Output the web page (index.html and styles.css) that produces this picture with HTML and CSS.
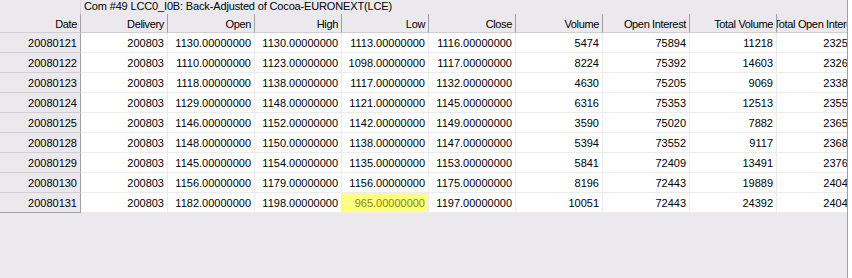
FILE: index.html
```html
<!DOCTYPE html>
<html>
<head>
<meta charset="utf-8">
<link rel="stylesheet" href="styles.css">
</head>
<body>
<div class="frame">
  <div class="view">
    <div class="titlebar">
      <div class="corner"></div>
      <div class="title">Com #49 LCC0_I0B: Back-Adjusted of Cocoa-EURONEXT(LCE)</div>
    </div>
    <div class="grid">
      <div class="hd fixed">Date</div>
      <div class="hd">Delivery</div>
      <div class="hd">Open</div>
      <div class="hd">High</div>
      <div class="hd">Low</div>
      <div class="hd">Close</div>
      <div class="hd">Volume</div>
      <div class="hd">Open Interest</div>
      <div class="hd">Total Volume</div>
      <div class="hd">Total Open Interest</div>

      <div class="fx">20080121</div><div class="c">200803</div><div class="c">1130.00000000</div><div class="c">1130.00000000</div><div class="c">1113.00000000</div><div class="c">1116.00000000</div><div class="c">5474</div><div class="c">75894</div><div class="c">11218</div><div class="c">232541</div>
      <div class="fx">20080122</div><div class="c">200803</div><div class="c">1110.00000000</div><div class="c">1123.00000000</div><div class="c">1098.00000000</div><div class="c">1117.00000000</div><div class="c">8224</div><div class="c">75392</div><div class="c">14603</div><div class="c">232673</div>
      <div class="fx">20080123</div><div class="c">200803</div><div class="c">1118.00000000</div><div class="c">1138.00000000</div><div class="c">1117.00000000</div><div class="c">1132.00000000</div><div class="c">4630</div><div class="c">75205</div><div class="c">9069</div><div class="c">233812</div>
      <div class="fx">20080124</div><div class="c">200803</div><div class="c">1129.00000000</div><div class="c">1148.00000000</div><div class="c">1121.00000000</div><div class="c">1145.00000000</div><div class="c">6316</div><div class="c">75353</div><div class="c">12513</div><div class="c">235520</div>
      <div class="fx">20080125</div><div class="c">200803</div><div class="c">1146.00000000</div><div class="c">1152.00000000</div><div class="c">1142.00000000</div><div class="c">1149.00000000</div><div class="c">3590</div><div class="c">75020</div><div class="c">7882</div><div class="c">236534</div>
      <div class="fx">20080128</div><div class="c">200803</div><div class="c">1148.00000000</div><div class="c">1150.00000000</div><div class="c">1138.00000000</div><div class="c">1147.00000000</div><div class="c">5394</div><div class="c">73552</div><div class="c">9117</div><div class="c">236812</div>
      <div class="fx">20080129</div><div class="c">200803</div><div class="c">1145.00000000</div><div class="c">1154.00000000</div><div class="c">1135.00000000</div><div class="c">1153.00000000</div><div class="c">5841</div><div class="c">72409</div><div class="c">13491</div><div class="c">237690</div>
      <div class="fx">20080130</div><div class="c">200803</div><div class="c">1156.00000000</div><div class="c">1179.00000000</div><div class="c">1156.00000000</div><div class="c">1175.00000000</div><div class="c">8196</div><div class="c">72443</div><div class="c">19889</div><div class="c">240461</div>
      <div class="fx last">20080131</div><div class="c">200803</div><div class="c">1182.00000000</div><div class="c">1198.00000000</div><div class="c hl">965.00000000</div><div class="c">1197.00000000</div><div class="c">10051</div><div class="c">72443</div><div class="c">24392</div><div class="c">240461</div>
    </div>
  </div>
  <div class="edge"></div>
</div>
</body>
</html>
```

FILE: styles.css
```css
html, body {
  margin: 0;
  padding: 0;
}
body {
  background: #ebe9ed;
  font-family: "Liberation Sans", Arial, sans-serif;
  font-size: 11px;
  color: #000;
  width: 852px;
  height: 278px;
  overflow: hidden;
}
.frame {
  display: flex;
  height: 278px;
}
.view {
  width: 847px;
  flex: none;
  overflow: hidden;
  border-right: 1px solid #a0a0a0;
}
.edge {
  flex: 1;
  background: #ffffff;
}
.titlebar {
  display: flex;
  height: 14px;
}
.corner {
  width: 80px;
  flex: none;
}
.title {
  flex: 1;
  border-left: 1px solid #d8d6da;
  padding-left: 3px;
  line-height: 13px;
  white-space: nowrap;
  overflow: hidden;
  letter-spacing: -0.15px;
}
.grid {
  display: grid;
  grid-template-columns: 81px repeat(9, 87px);
  grid-auto-rows: 20px;
  grid-template-rows: 19px;
  width: 864px;
}
.grid > div {
  display: flex;
  justify-content: flex-end;
  align-items: center;
  overflow: hidden;
  white-space: nowrap;
  padding-right: 3px;
  box-sizing: border-box;
}
.hd {
  background: #ebe9ed;
  border-right: 1px solid #a0a0a0;
  border-bottom: 1px solid #d0ced2;
  padding-top: 1px;
  letter-spacing: -0.35px;
}
.fx {
  background: #ebe9ed;
  border-right: 1px solid #a0a0a0;
  border-bottom: 1px solid #d0ced2;
}
.fx.last {
  border-bottom-color: #a0a0a0;
}
.c {
  background: #ffffff;
  border-right: 1px solid #ececec;
  border-bottom: 1px solid #ececec;
}
.c.hl {
  background: #ffff80;
  color: #8a8a00;
}
```
